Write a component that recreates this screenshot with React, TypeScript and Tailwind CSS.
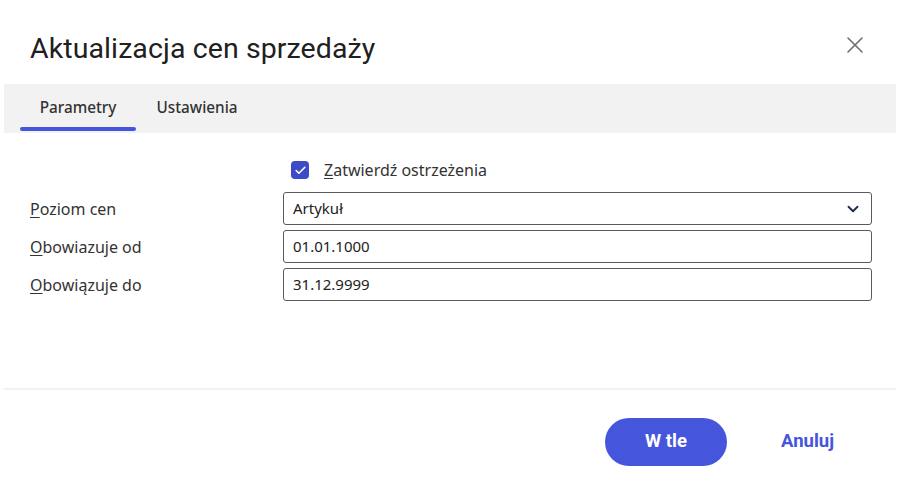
import { ChevronDown, X, Check } from "lucide-react";

const fields = [
  { label: "Poziom cen", key: "P", rest: "oziom cen", value: "Artykuł", select: true },
  { label: "Obowiazuje od", key: "O", rest: "bowiazuje od", value: "01.01.1000" },
  { label: "Obowiązuje do", key: "O", rest: "bowiązuje do", value: "31.12.9999" },
];

export default function App() {
  return (
    <div className="w-[905px] h-[486px] bg-white font-['Noto_Sans',sans-serif] text-[#222] overflow-hidden">
      <div className="flex items-center justify-between pl-[30px] pr-[36px] h-[84px] pt-[14px]">
        <h1 className="font-['Roboto',sans-serif] text-[28.5px] text-[#202020] tracking-[0.1px]">
          Aktualizacja cen sprzedaży
        </h1>
        <X className="size-[28px] text-[#707070] mb-[8px]" strokeWidth={1.4} />
      </div>

      <div className="mx-[4px] mr-[9px] h-[49px] bg-[#f2f2f2] flex items-end pl-[16px] gap-[4px]">
        <div className="flex flex-col items-center w-[116px]">
          <span className="text-[15.3px] font-medium text-[#333] leading-none pb-[12px]">Parametry</span>
          <div className="h-[4px] w-full rounded-full bg-[#4656dc] mb-[2px]" />
        </div>
        <div className="flex flex-col items-center w-[102px] ml-[6px]">
          <span className="text-[15.3px] font-medium text-[#333] leading-none pb-[18px]">Ustawienia</span>
        </div>
      </div>

      <div className="pl-[30px] pr-[33px] pt-[28px] h-[255px]">
        <div className="flex items-center ml-[261px] gap-[15px] h-[18px]">
          <div className="size-[18px] rounded-[4px] bg-[#3d4bc7] flex items-center justify-center">
            <Check className="size-[13px] text-white" strokeWidth={3} />
          </div>
          <span className="text-[16px] text-[#333]">
            <span className="underline underline-offset-2">Z</span>atwierdź ostrzeżenia
          </span>
        </div>

        <div className="mt-[13px] flex flex-col gap-[5px]">
          {fields.map((f) => (
            <div key={f.label} className="flex items-center">
              <div className="w-[253px] text-[16px] text-[#333]">
                <span className="underline underline-offset-2">{f.key}</span>
                {f.rest}
              </div>
              <div className="flex-1 h-[33px] border border-[#5a5a5a] rounded-[3px] flex items-center justify-between pl-[9px] pr-[9px] text-[15px] text-[#222]">
                <span>{f.value}</span>
                {f.select && <ChevronDown className="size-[18px] text-[#1f2d4d]" strokeWidth={2.5} />}
              </div>
            </div>
          ))}
        </div>
      </div>

      <div className="mx-[4px] mr-[9px] h-[2px] bg-[#f2f2f2]" />

      <div className="flex items-center justify-end pr-[71px] pt-[28px] gap-[54px] font-['Roboto',sans-serif]">
        <button className="w-[122px] h-[48px] rounded-full bg-[#4656dc] text-white text-[18.5px] font-bold">
          W tle
        </button>
        <button className="text-[#4656dc] text-[18.5px] font-bold">Anuluj</button>
      </div>
    </div>
  );
}
